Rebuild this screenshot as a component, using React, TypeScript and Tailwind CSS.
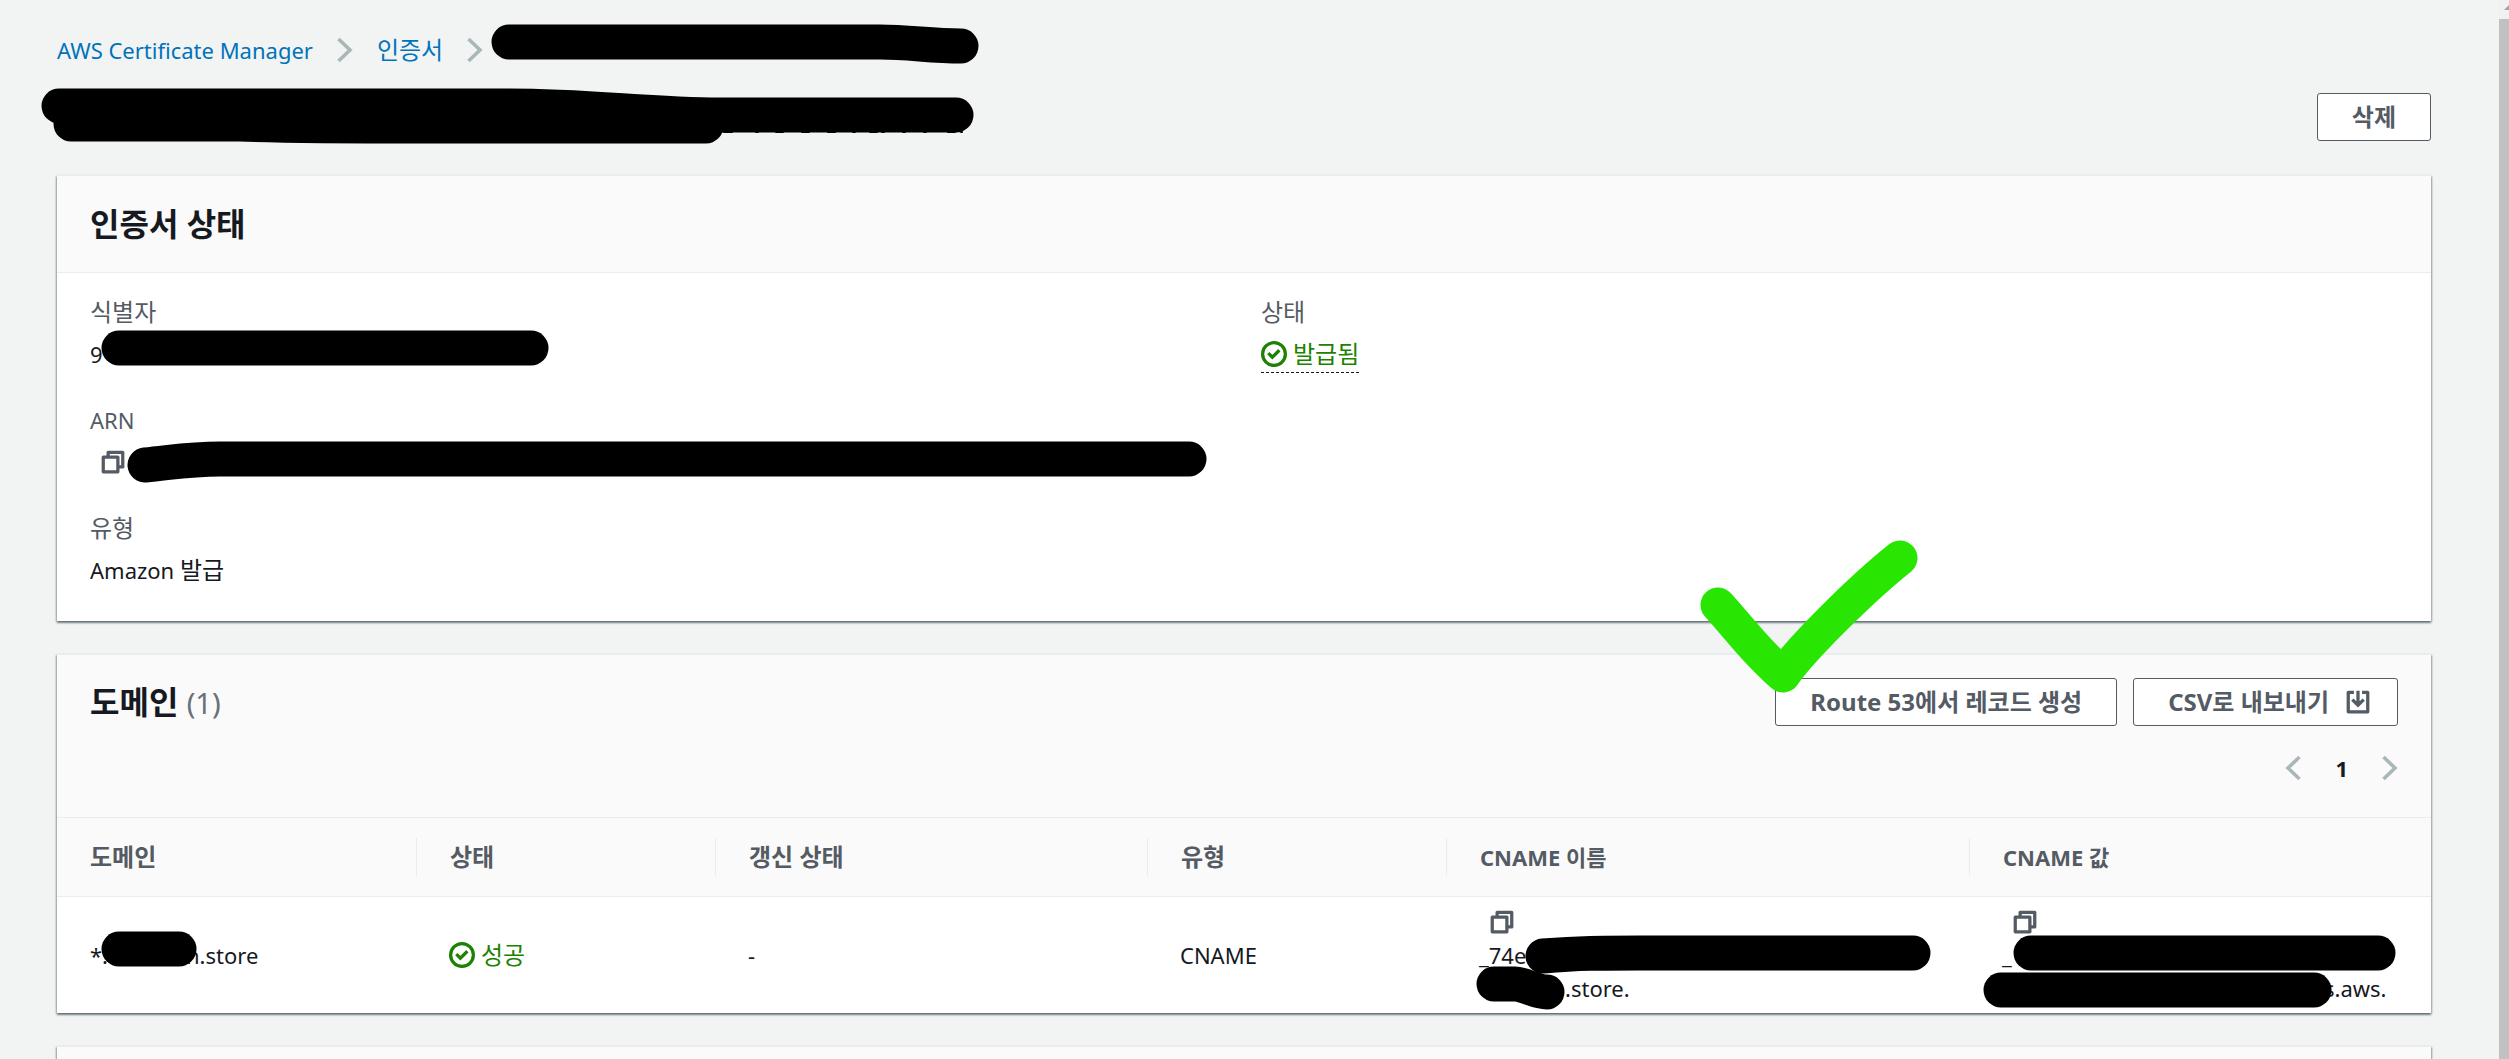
import { clsx } from 'clsx'
import type { ReactNode } from 'react'

const columns = [
  { label: '도메인', width: 'w-[359px]', size: 'text-[24px]' },
  { label: '상태', width: 'w-[299px]', size: 'text-[24px]' },
  { label: '갱신 상태', width: 'w-[432px]', size: 'text-[24px]' },
  { label: '유형', width: 'w-[299px]', size: 'text-[24px]' },
  { label: 'CNAME 이름', width: 'w-[523px]', size: 'text-[22px]' },
  { label: 'CNAME 값', width: 'w-[462px]', size: 'text-[22px]' },
]

function Chevron({ left = false }: { left?: boolean }) {
  return (
    <svg viewBox="0 0 16 26" className="w-4 h-[26px] shrink-0" fill="none" stroke="#aab7b8" strokeWidth="3.6">
      <path d={left ? 'M14.5 2 3 13l11.5 11' : 'M1.5 2 13 13 1.5 24'} />
    </svg>
  )
}

function CopyIcon() {
  return (
    <svg viewBox="0 0 16 16" className="w-[26px] h-[26px]" fill="none" stroke="#545b64" strokeWidth="2" strokeLinejoin="round">
      <path d="M2 5h9v9H2z" />
      <path d="M5 5V2h9v9h-3" />
    </svg>
  )
}

function CheckIcon() {
  return (
    <svg viewBox="0 0 16 16" className="w-[26px] h-[26px] shrink-0" fill="none" stroke="#1d8102" strokeWidth="2">
      <circle cx="8" cy="8" r="7" />
      <path d="M4.5 7.5 7 10l4.3-4.3" />
    </svg>
  )
}

function DownloadIcon() {
  return (
    <svg viewBox="0 0 16 16" className="w-[26px] h-[26px] -mr-2" fill="none" stroke="#545b64" strokeWidth="2">
      <path d="M5.5 2H2v12h12V2h-3.5" strokeLinejoin="round" />
      <path d="M8 1v9M4.5 6.5 8 10l3.5-3.5" />
    </svg>
  )
}

function OutlineButton({ children }: { children: ReactNode }) {
  return (
    <button
      type="button"
      className="flex items-center gap-4 h-12 px-[34px] rounded-[3px] border border-[#545b64] bg-white text-[24px] leading-9 font-bold text-[#545b64]"
    >
      {children}
    </button>
  )
}

function Card({ children }: { children?: ReactNode }) {
  return (
    <section className="bg-white border-t border-[#eaeded] shadow-[0_2px_2px_0_rgba(0,28,36,0.4),1px_1px_2px_0_rgba(0,28,36,0.25),-1px_1px_2px_0_rgba(0,28,36,0.25)]">
      {children}
    </section>
  )
}

function Field({ label, children }: { label: ReactNode; children?: ReactNode }) {
  return (
    <div>
      <dt className="h-9 leading-9 text-[#545b64]">{label}</dt>
      <dd className="flex items-center h-12">{children}</dd>
    </div>
  )
}

// Marker strokes drawn over the page: redactions in black, the tick in green
function Markup() {
  return (
    <svg
      width="2509"
      height="1059"
      viewBox="0 0 2509 1059"
      className="absolute left-0 top-0 max-w-none pointer-events-none"
      fill="none"
      stroke="#000"
      strokeWidth="35"
      strokeLinecap="round"
      strokeLinejoin="round"
      aria-hidden="true"
    >
      <path d="M509 42H880C910 42 930 46 961 46" />
      <path d="M59 106H510C590 106 650 115 720 115H956" />
      <path d="M71 124H240C290 126 330 126 420 126H706" />
      <path d="M100 114H500" />
      <path
        strokeWidth="2"
        d="M724 132h8M756 132h2M776 132h7M802 132h7M828 132h7M853 132h2M870 132h7M882 132h2M903 132h2M924 132h2M948 132h7M961 132h1"
      />
      <path d="M119 348H531" />
      <path d="M145 465C175 462 190 459 220 459H1189" />
      <path d="M119 949H179" />
      <path d="M1543 956C1580 953 1600 953 1640 953H1913" />
      <path d="M1494 984H1515C1525 984 1535 992 1547 992" />
      <path d="M2031 953H2378" />
      <path d="M2001 990H2314" />
      <path stroke="#29e602" d="M1718 605C1740 629 1755 651 1783 675C1800 650 1860 590 1900 558" />
    </svg>
  )
}

export default function App() {
  return (
    <div className="relative flex h-screen overflow-hidden bg-[#f2f3f3] font-['Noto_Sans','Noto_Sans_CJK_KR',sans-serif] text-[22px] leading-9 text-[#16191f]">
      <main className="flex-1 min-w-0 pl-[57px] pr-[68px] pt-8">
        <nav className="flex items-center gap-6 h-9 text-[#0073bb]">
          <a href="#acm">AWS Certificate Manager</a>
          <Chevron />
          <a href="#certificates" className="text-[24px]">인증서</a>
          <Chevron />
        </nav>

        <div className="flex justify-end mt-[25px] mb-[34px]">
          <OutlineButton>삭제</OutlineButton>
        </div>

        <div className="flex flex-col gap-[33px]">
          <Card>
            <header className="px-[33px] py-7 border-b border-[#eaeded] bg-[#fafafa]">
              <h2 className="text-[32px] leading-10 font-bold">인증서 상태</h2>
            </header>
            <div className="grid grid-cols-2 px-[33px] pt-[21px] pb-[27px]">
              <dl className="flex flex-col gap-6">
                <Field label={<span className="text-[24px]">식별자</span>}>9</Field>
                <Field label="ARN">
                  <button type="button" aria-label="ARN 복사" className="pl-2.5">
                    <CopyIcon />
                  </button>
                </Field>
                <Field label={<span className="text-[24px]">유형</span>}>
                  <span>
                    Amazon <span className="text-[24px]">발급</span>
                  </span>
                </Field>
              </dl>
              <dl className="pl-[17px]">
                <Field label={<span className="text-[24px]">상태</span>}>
                  <span className="flex items-center gap-1.5 border-b border-dashed border-[#16191f] text-[24px] text-[#1d8102]">
                    <CheckIcon />
                    발급됨
                  </span>
                </Field>
              </dl>
            </div>
          </Card>

          <Card>
            <header className="px-[33px] pt-[23px] pb-[31px] bg-[#fafafa]">
              <div className="flex items-center justify-between">
                <h2 className="text-[32px] leading-10 font-bold">
                  도메인 <span className="text-[29px] font-normal text-[#687078]">(1)</span>
                </h2>
                <div className="flex gap-4">
                  <OutlineButton>Route 53에서 레코드 생성</OutlineButton>
                  <OutlineButton>
                    CSV로 내보내기
                    <DownloadIcon />
                  </OutlineButton>
                </div>
              </div>
              <div className="flex items-center justify-end gap-[34px] h-9 mt-6">
                <button type="button" aria-label="이전 페이지">
                  <Chevron left />
                </button>
                <button type="button" className="font-bold">1</button>
                <button type="button" aria-label="다음 페이지">
                  <Chevron />
                </button>
              </div>
            </header>
            <table className="w-full table-fixed text-left">
              <thead className="bg-[#fafafa] border-y border-[#eaeded]">
                <tr>
                  {columns.map((col, i) => (
                    <th key={col.label} className={clsx(col.width, col.size, 'py-5 font-bold text-[#545b64]')}>
                      <div className={clsx('pl-[33px] leading-[38px]', i > 0 && 'border-l border-[#eaeded]')}>
                        {col.label}
                      </div>
                    </th>
                  ))}
                </tr>
              </thead>
              <tbody>
                <tr>
                  <td className="pl-[33px]">
                    <span className="inline-block w-24">*.</span>n.store
                  </td>
                  <td className="pl-[33px]">
                    <span className="flex items-center gap-1.5 text-[24px] text-[#1d8102]">
                      <CheckIcon />
                      성공
                    </span>
                  </td>
                  <td className="pl-[33px]">-</td>
                  <td className="pl-[33px]">CNAME</td>
                  <td className="pl-[33px] py-2">
                    <button type="button" aria-label="CNAME 이름 복사" className="block pl-2.5 py-1">
                      <CopyIcon />
                    </button>
                    <div className="leading-[33px]">_74e</div>
                    <div className="pl-[86px] leading-[33px]">.store.</div>
                  </td>
                  <td className="pl-[33px] py-2">
                    <button type="button" aria-label="CNAME 값 복사" className="block pl-2.5 py-1">
                      <CopyIcon />
                    </button>
                    <div className="leading-[33px]">_</div>
                    <div className="pl-[322px] leading-[33px]">s.aws.</div>
                  </td>
                </tr>
              </tbody>
            </table>
          </Card>

          <Card>
            <div className="h-24 bg-[#fafafa]" />
          </Card>
        </div>
      </main>

      <div className="w-2.5 shrink-0 overflow-hidden bg-[#f1f1f1]">
        <svg viewBox="0 0 10 19" className="w-2.5 h-[19px]" fill="#a3a3a3">
          <path d="M5 10h5V5z" />
        </svg>
        <div className="h-full bg-[#c1c1c1]" />
      </div>

      <Markup />
    </div>
  )
}
